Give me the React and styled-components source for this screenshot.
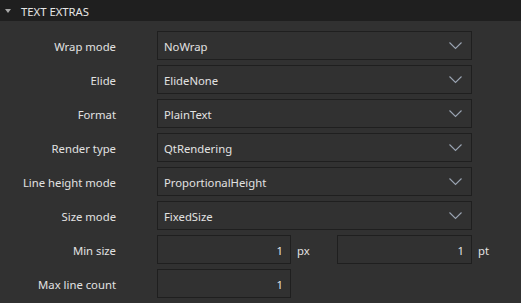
import React from "react";
import styled, { createGlobalStyle } from "styled-components";

const GlobalStyle = createGlobalStyle`
  html, body {
    margin: 0;
    padding: 0;
    background: #313131;
  }
  body {
    font-family: "Noto Sans", "Open Sans", sans-serif;
    font-size: 11.3px;
    color: #e2e2e2;
  }
`;

const combos = [
  ["Wrap mode", "NoWrap"],
  ["Elide", "ElideNone"],
  ["Format", "PlainText"],
  ["Render type", "QtRendering"],
  ["Line height mode", "ProportionalHeight"],
  ["Size mode", "FixedSize"],
];

const Chevron = () => (
  <svg width="13" height="8" viewBox="0 0 13 8">
    <polyline
      points="0.5,0.5 6.5,6.5 12.5,0.5"
      fill="none"
      stroke="#9aa4b2"
      strokeWidth="1.1"
    />
  </svg>
);

const App = () => {
  return (
    <Panel>
      <GlobalStyle />
      <Header>
        <Caret />
        <Title>TEXT EXTRAS</Title>
      </Header>
      <Rows>
        {combos.map(([label, value]) => (
          <Row key={label}>
            <Label>{label}</Label>
            <Combo>
              <Value>{value}</Value>
              <Chevron />
            </Combo>
          </Row>
        ))}
        <Row>
          <Label>Min size</Label>
          <Pair>
            <Spin $width={134}>
              <Value>1</Value>
            </Spin>
            <Unit $width={46}>px</Unit>
            <Spin $width={135}>
              <Value>1</Value>
            </Spin>
            <Unit>pt</Unit>
          </Pair>
        </Row>
        <Row>
          <Label>Max line count</Label>
          <Pair>
            <Spin $width={134}>
              <Value>1</Value>
            </Spin>
          </Pair>
        </Row>
      </Rows>
    </Panel>
  );
};

const Panel = styled.div`
  width: 521px;
  height: 303px;
  background: #313131;
  overflow: hidden;
`;

const Header = styled.div`
  height: 21px;
  background: #1f1f1f;
  display: flex;
  align-items: center;
  padding-left: 5px;
  gap: 10px;
`;

const Caret = styled.span`
  width: 0;
  height: 0;
  border-left: 3.5px solid transparent;
  border-right: 3.5px solid transparent;
  border-top: 4px solid #a8a8a8;
`;

const Title = styled.span`
  color: #e6e6e6;
  padding-top: 1px;
`;

const Rows = styled.div`
  display: flex;
  flex-direction: column;
  gap: 5px;
  padding-top: 10px;
`;

const Row = styled.div`
  display: grid;
  grid-template-columns: 116px auto;
  column-gap: 41px;
  align-items: center;
  height: 29px;
`;

const Label = styled.div`
  text-align: right;
  white-space: nowrap;
  padding-top: 2px;
`;

const Box = styled.div`
  box-sizing: border-box;
  height: 29px;
  border: 1px solid #1f1f1f;
  display: flex;
  align-items: center;
`;

const Value = styled.span`
  padding-top: 2px;
`;

const Combo = styled(Box)`
  width: 315px;
  padding: 0 9px 0 6px;
  justify-content: space-between;
`;

const Pair = styled.div`
  display: flex;
  align-items: center;
`;

const Spin = styled(Box)`
  width: ${(p) => p.$width}px;
  justify-content: flex-end;
  padding-right: 7px;
`;

const Unit = styled.span`
  width: ${(p) => (p.$width ? `${p.$width}px` : "auto")};
  box-sizing: border-box;
  padding-left: 6px;
  padding-top: 2px;
`;

export default App;
